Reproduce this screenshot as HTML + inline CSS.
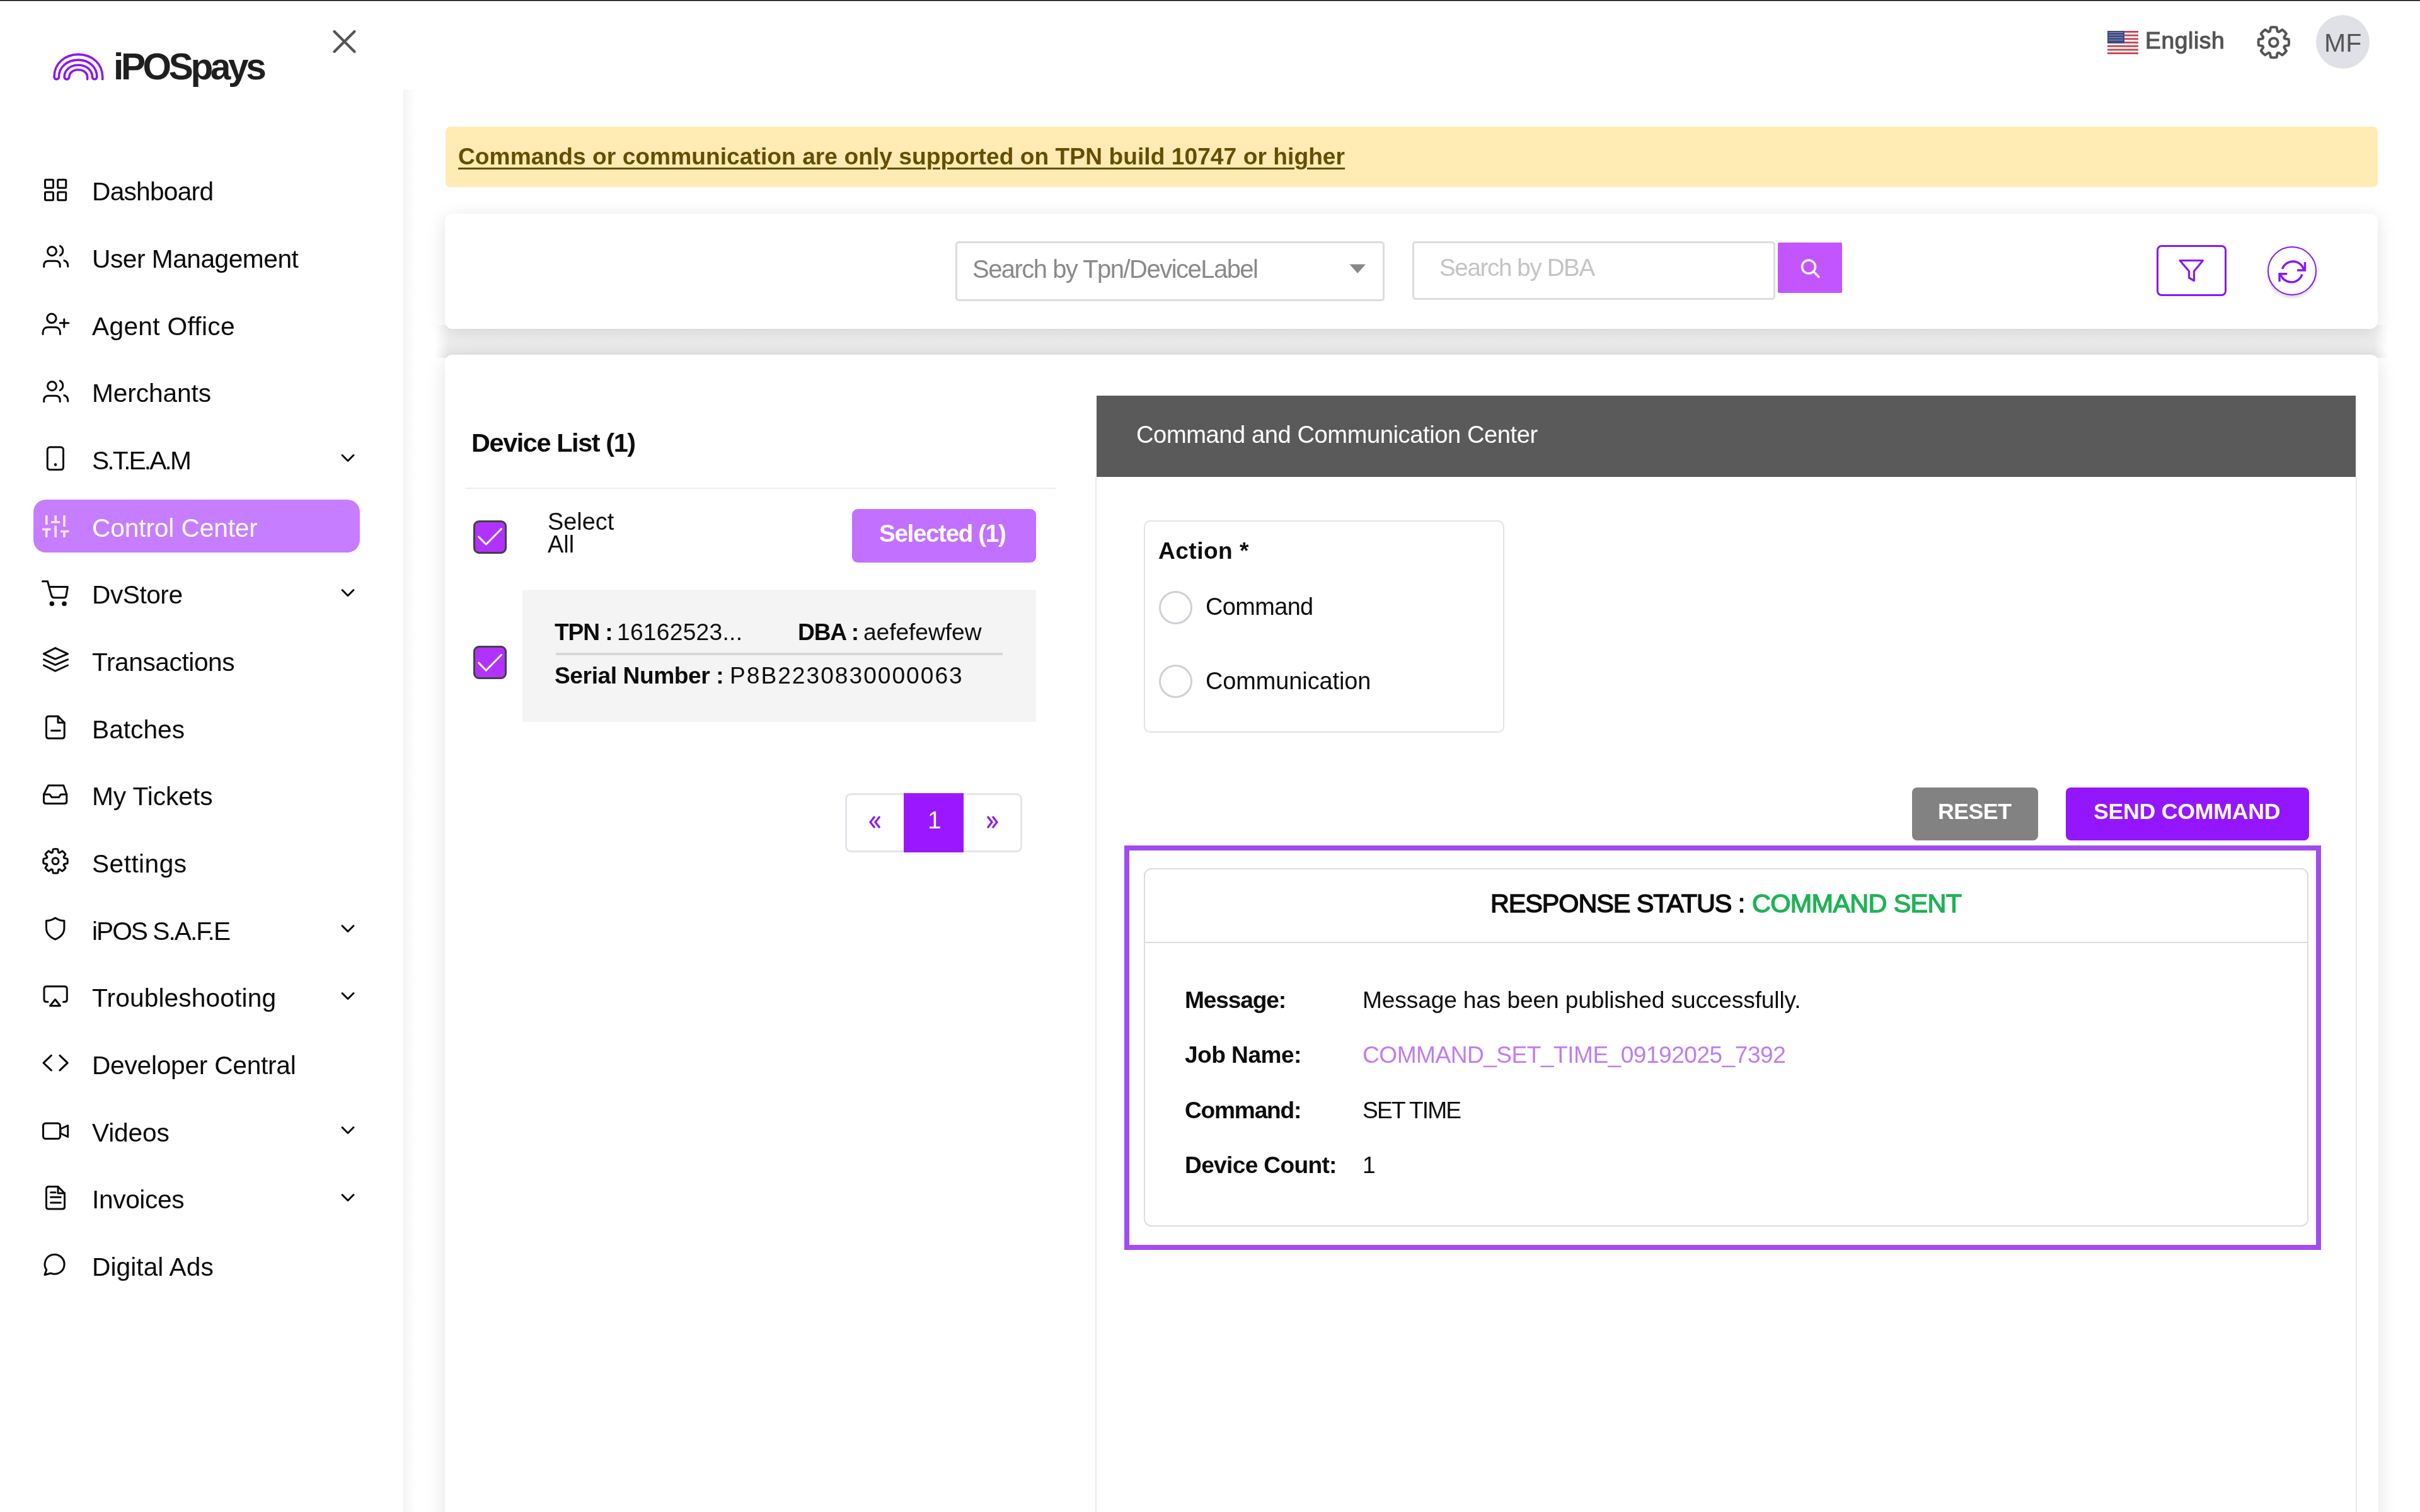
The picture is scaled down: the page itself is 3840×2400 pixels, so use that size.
<!DOCTYPE html>
<html><head><meta charset="utf-8">
<style>
html,body{margin:0;padding:0;}
body{width:3840px;height:2400px;overflow:hidden;position:relative;background:#fff;font-family:"Liberation Sans",sans-serif;}
.a{position:absolute;box-sizing:border-box;}
.t{position:absolute;white-space:pre;line-height:1;will-change:transform;font-family:"Liberation Sans",sans-serif;}
svg{position:absolute;overflow:visible;}
@media (max-width:2500px){body{zoom:0.5;}}
</style></head><body>
<!-- top black line -->
<div class="a" style="left:0;top:0;width:3840px;height:2px;background:linear-gradient(#000 0,#000 1px,#888 1px,#888 2px);"></div>

<!-- sidebar shadow strip -->
<div class="a" style="left:640px;top:142px;width:22px;height:2258px;background:linear-gradient(90deg,#f2f3f3,#fbfbfb 50%,#fff);"></div>

<div class="a" style="left:690px;top:516px;width:3099px;height:52px;background:linear-gradient(#efefef,#f0f0f0 20%,#eeeeee 50%,#e9e9e9 80%,#e4e4e4);-webkit-mask-image:linear-gradient(90deg,transparent 0,#000 22px,#000 3077px,transparent 3099px);"></div>
<!-- search card -->
<div class="a" style="left:706px;top:339px;width:3067px;height:183px;border-radius:12px;background:#fff;box-shadow:0 6px 30px rgba(0,0,0,0.12);"></div>
<!-- main card -->
<div class="a" style="left:706px;top:563px;width:3068px;height:1900px;border-radius:12px;background:#fff;box-shadow:0 6px 30px rgba(0,0,0,0.12);"></div>
<!-- banner -->
<div class="a" style="left:707px;top:201px;width:3066px;height:96px;border-radius:8px;background:#ffebb3;"></div>

<!-- close X -->
<svg style="left:0;top:0" width="10" height="10"><path d="M530.5 50 L562.5 82 M562.5 50 L530.5 82" stroke="#555" stroke-width="4.2" stroke-linecap="round" fill="none"/></svg>

<!-- logo -->
<svg style="left:0;top:0" width="10" height="10"><path d="M162.7 125.8 L162.7 122.0 C162.70 101.50 146.34 86.35 124.20 86.35 C102.23 86.35 86.00 101.50 86.00 122.00 A3.75 3.75 0 0 0 93.50 122.00 C93.50 106.53 106.55 95.10 124.20 95.10 C141.22 95.10 153.80 106.53 153.80 122.00 A3.70 3.70 0 0 1 146.40 122.00 C146.40 111.22 136.97 103.25 124.20 103.25 C111.49 103.25 102.10 111.22 102.10 122.00 A3.90 3.90 0 0 0 109.90 122.00 C109.90 115.56 115.98 110.80 124.20 110.80 C132.48 110.80 138.60 115.56 138.60 122.00 L138.6 125.8" stroke="#8a17f4" stroke-width="3.6" stroke-linecap="round" stroke-linejoin="round" fill="none"/></svg>

<!-- control center highlight -->
<div class="a" style="left:53px;top:792.5px;width:518px;height:84.5px;border-radius:20px;background:#c67dff;"></div>

<svg style="left:64px;top:268.75px" width="48" height="52" viewBox="0 0 48 52"><g fill="none" stroke="#0a0a0a" stroke-width="3" stroke-linejoin="round" stroke-linecap="round"><rect x="7.5" y="16.2" width="13" height="13" rx="1.5"/><rect x="27.7" y="16.2" width="13" height="13" rx="1.5"/><rect x="7.5" y="36" width="13" height="12.8" rx="1.5"/><rect x="27.7" y="36" width="13" height="12.8" rx="1.5"/></g></svg>
<svg style="left:64px;top:375.42px" width="48" height="52" viewBox="0 0 48 52"><g fill="none" stroke="#0a0a0a" stroke-width="3" stroke-linejoin="round" stroke-linecap="round"><circle cx="18.5" cy="23.8" r="7"/><path d="M5.7 48.5 V46.5 C5.7 42 8 39.2 13 39.2 H24 C29 39.2 31.2 42 31.2 46.5 V48.5"/><path d="M31.3 15.5 A8.5 8.5 0 0 1 31.3 30.5"/><path d="M37.8 38.5 C41.5 39.5 43.8 42.5 43.8 48"/></g></svg>
<svg style="left:64px;top:482.09px" width="48" height="52" viewBox="0 0 48 52"><g fill="none" stroke="#0a0a0a" stroke-width="3" stroke-linejoin="round" stroke-linecap="round"><circle cx="17.9" cy="23.3" r="7.2"/><path d="M4.1 48.5 V46 C4.1 41.5 6.5 37.6 12 37.6 H23.5 C29 37.6 31.4 41.5 31.4 46 V48.5"/><path d="M37.8 24.7 V37.2 M31.3 30.8 H44.9"/></g></svg>
<svg style="left:64px;top:588.76px" width="48" height="52" viewBox="0 0 48 52"><g fill="none" stroke="#0a0a0a" stroke-width="3" stroke-linejoin="round" stroke-linecap="round"><circle cx="18.5" cy="23.8" r="7"/><path d="M5.7 48.5 V46.5 C5.7 42 8 39.2 13 39.2 H24 C29 39.2 31.2 42 31.2 46.5 V48.5"/><path d="M31.3 15.5 A8.5 8.5 0 0 1 31.3 30.5"/><path d="M37.8 38.5 C41.5 39.5 43.8 42.5 43.8 48"/></g></svg>
<svg style="left:64px;top:695.43px" width="48" height="52" viewBox="0 0 48 52"><g fill="none" stroke="#0a0a0a" stroke-width="3" stroke-linejoin="round" stroke-linecap="round"><rect x="11.25" y="14.85" width="25.25" height="35.75" rx="4"/><circle cx="24" cy="42.6" r="0.8" fill="#0a0a0a"/></g></svg>
<svg style="left:540px;top:719.43px" width="24" height="16" viewBox="0 0 24 16"><path d="M3 3.5 L12 12.5 L21 3.5" fill="none" stroke="#0a0a0a" stroke-width="3" stroke-linecap="round" stroke-linejoin="round"/></svg>
<svg style="left:64px;top:802.10px" width="48" height="52" viewBox="0 0 48 52"><g fill="none" stroke="#ffe6ff" stroke-width="3" stroke-linejoin="round" stroke-linecap="round"><path d="M9.75 16 V31 M9.75 37 V51 M3 38.2 H16.5 M24.1 16 V25.5 M24.1 32.5 V51 M17 26.8 H31 M38 16 V34 M38 40.5 V51 M32 41.5 H45.5" stroke="#ffe6ff" stroke-width="3.6" stroke-linecap="butt"/></g></svg>
<svg style="left:64px;top:908.77px" width="48" height="52" viewBox="0 0 48 52"><g fill="none" stroke="#0a0a0a" stroke-width="3" stroke-linejoin="round" stroke-linecap="round"><path d="M3.5 13.7 H11.5 L17.5 36 Q18.5 39.7 22.5 39.7 H37.5 Q40.5 39.7 41 36.5 L43.3 22.5 H14.5"/><circle cx="18.3" cy="49.2" r="2.3" fill="#0a0a0a"/><circle cx="38" cy="49.2" r="2.3" fill="#0a0a0a"/></g></svg>
<svg style="left:540px;top:932.77px" width="24" height="16" viewBox="0 0 24 16"><path d="M3 3.5 L12 12.5 L21 3.5" fill="none" stroke="#0a0a0a" stroke-width="3" stroke-linecap="round" stroke-linejoin="round"/></svg>
<svg style="left:64px;top:1015.44px" width="48" height="52" viewBox="0 0 48 52"><g fill="none" stroke="#0a0a0a" stroke-width="3" stroke-linejoin="round" stroke-linecap="round"><path d="M23.7 13.6 L5.5 22.8 L23.7 31.1 L43.5 22.8 Z"/><path d="M5.5 31.9 L23.7 40.3 L43.5 31.9"/><path d="M5.5 41 L23.7 50.1 L43.5 41"/></g></svg>
<svg style="left:64px;top:1122.11px" width="48" height="52" viewBox="0 0 48 52"><g fill="none" stroke="#0a0a0a" stroke-width="3" stroke-linejoin="round" stroke-linecap="round"><path d="M9.5 19 Q9.5 14.9 13.5 14.9 H28 L38.2 25 V46 Q38.2 50 34.2 50 H13.5 Q9.5 50 9.5 46 Z"/><path d="M28 14.9 V25 H38.2"/><path d="M17.6 37.8 H31.3"/></g></svg>
<svg style="left:64px;top:1228.78px" width="48" height="52" viewBox="0 0 48 52"><g fill="none" stroke="#0a0a0a" stroke-width="3" stroke-linejoin="round" stroke-linecap="round"><path d="M5.5 32 L12.8 17.7 H36.8 L41.8 32 V43 Q41.8 46.6 38.2 46.6 H9 Q5.5 46.6 5.5 43 Z"/><path d="M5.5 32 H15 L18 36.5 H29.5 L32.5 32 H41.8"/></g></svg>
<svg style="left:64px;top:1335.45px" width="48" height="52" viewBox="0 0 48 52"><g fill="none" stroke="#0a0a0a" stroke-width="3" stroke-linejoin="round" stroke-linecap="round"><path d="M37.71 27.08 L42.95 28.12 A19.3 19.3 0 0 1 42.95 35.48 L37.71 36.52 A14.5 14.5 0 0 1 37.03 38.16 L40.00 42.59 A19.3 19.3 0 0 1 34.79 47.80 L30.36 44.83 A14.5 14.5 0 0 1 28.72 45.51 L27.68 50.75 A19.3 19.3 0 0 1 20.32 50.75 L19.28 45.51 A14.5 14.5 0 0 1 17.64 44.83 L13.21 47.80 A19.3 19.3 0 0 1 8.00 42.59 L10.97 38.16 A14.5 14.5 0 0 1 10.29 36.52 L5.05 35.48 A19.3 19.3 0 0 1 5.05 28.12 L10.29 27.08 A14.5 14.5 0 0 1 10.97 25.44 L8.00 21.01 A19.3 19.3 0 0 1 13.21 15.80 L17.64 18.77 A14.5 14.5 0 0 1 19.28 18.09 L20.32 12.85 A19.3 19.3 0 0 1 27.68 12.85 L28.72 18.09 A14.5 14.5 0 0 1 30.36 18.77 L34.79 15.80 A19.3 19.3 0 0 1 40.00 21.01 L37.03 25.44 A14.5 14.5 0 0 1 37.71 27.08 Z"/><circle cx="24" cy="31.8" r="5"/></g></svg>
<svg style="left:64px;top:1442.12px" width="48" height="52" viewBox="0 0 48 52"><g fill="none" stroke="#0a0a0a" stroke-width="3" stroke-linejoin="round" stroke-linecap="round"><path d="M23.7 15 C28 18 33 19.5 37.9 19.5 V31 C37.9 40 31 46 23.7 49 C16.4 46 9.5 40 9.5 31 V19.5 C14.4 19.5 19.4 18 23.7 15 Z"/></g></svg>
<svg style="left:540px;top:1466.12px" width="24" height="16" viewBox="0 0 24 16"><path d="M3 3.5 L12 12.5 L21 3.5" fill="none" stroke="#0a0a0a" stroke-width="3" stroke-linecap="round" stroke-linejoin="round"/></svg>
<svg style="left:64px;top:1548.79px" width="48" height="52" viewBox="0 0 48 52"><g fill="none" stroke="#0a0a0a" stroke-width="3" stroke-linejoin="round" stroke-linecap="round"><path d="M12 41.3 H10 Q6 41.3 6 37.3 V20.7 Q6 16.7 10 16.7 H38.3 Q42.3 16.7 42.3 20.7 V37.3 Q42.3 41.3 38.3 41.3 H36.5"/><path d="M23.6 37.5 L31.5 47.5 H15.5 Z"/></g></svg>
<svg style="left:540px;top:1572.79px" width="24" height="16" viewBox="0 0 24 16"><path d="M3 3.5 L12 12.5 L21 3.5" fill="none" stroke="#0a0a0a" stroke-width="3" stroke-linecap="round" stroke-linejoin="round"/></svg>
<svg style="left:64px;top:1655.46px" width="48" height="52" viewBox="0 0 48 52"><g fill="none" stroke="#0a0a0a" stroke-width="3" stroke-linejoin="round" stroke-linecap="round"><path d="M17.4 20.3 L5 32.1 L17.4 43.9 M30.9 20.3 L43.2 32.1 L30.9 43.9"/></g></svg>
<svg style="left:64px;top:1762.13px" width="48" height="52" viewBox="0 0 48 52"><g fill="none" stroke="#0a0a0a" stroke-width="3" stroke-linejoin="round" stroke-linecap="round"><rect x="4.5" y="21" width="27" height="24.5" rx="4"/><path d="M32 30 L43.7 24.5 V42.5 L32 37 Z"/></g></svg>
<svg style="left:540px;top:1786.13px" width="24" height="16" viewBox="0 0 24 16"><path d="M3 3.5 L12 12.5 L21 3.5" fill="none" stroke="#0a0a0a" stroke-width="3" stroke-linecap="round" stroke-linejoin="round"/></svg>
<svg style="left:64px;top:1868.80px" width="48" height="52" viewBox="0 0 48 52"><g fill="none" stroke="#0a0a0a" stroke-width="3" stroke-linejoin="round" stroke-linecap="round"><path d="M9.5 18.5 Q9.5 14.5 13.5 14.5 H28 L38.5 25 V46.5 Q38.5 50 35 50 H13.5 Q9.5 50 9.5 46.5 Z"/><path d="M28 14.5 V25 H38.5"/><path d="M16.5 23.8 H24 M16.5 31.3 H32.3 M16.5 40 H32.3"/></g></svg>
<svg style="left:540px;top:1892.80px" width="24" height="16" viewBox="0 0 24 16"><path d="M3 3.5 L12 12.5 L21 3.5" fill="none" stroke="#0a0a0a" stroke-width="3" stroke-linecap="round" stroke-linejoin="round"/></svg>
<svg style="left:64px;top:1975.47px" width="48" height="52" viewBox="0 0 48 52"><g fill="none" stroke="#0a0a0a" stroke-width="3" stroke-linejoin="round" stroke-linecap="round"><path d="M7 48.5 L9.8 40.5 A15.5 15.5 0 1 1 16.5 46 Z"/></g></svg>

<!-- header right -->
<svg style="left:3344px;top:49px" width="49" height="37" viewBox="0 0 49 37">
  <rect width="49" height="37" fill="#fff"/>
  <g fill="#c8444f"><rect y="0" width="49" height="2.85"/><rect y="5.7" width="49" height="2.85"/><rect y="11.4" width="49" height="2.85"/><rect y="17.1" width="49" height="2.85"/><rect y="22.8" width="49" height="2.85"/><rect y="28.5" width="49" height="2.85"/><rect y="34.15" width="49" height="2.85"/></g>
  <rect width="27" height="20" fill="#3b4a7e"/>
  <g fill="#9aa6cc" opacity="0.8"><rect x="2" y="2" width="23" height="1.2"/><rect x="2" y="6" width="23" height="1.2"/><rect x="2" y="10" width="23" height="1.2"/><rect x="2" y="14" width="23" height="1.2"/></g>
</svg>
<svg style="left:0;top:0" width="10" height="10"><path d="M3625.10 61.24 L3631.65 62.56 A24.3 24.3 0 0 1 3631.65 71.84 L3625.10 73.16 A18.3 18.3 0 0 1 3624.25 75.22 L3627.95 80.79 A24.3 24.3 0 0 1 3621.39 87.35 L3615.82 83.65 A18.3 18.3 0 0 1 3613.76 84.50 L3612.44 91.05 A24.3 24.3 0 0 1 3603.16 91.05 L3601.84 84.50 A18.3 18.3 0 0 1 3599.78 83.65 L3594.21 87.35 A24.3 24.3 0 0 1 3587.65 80.79 L3591.35 75.22 A18.3 18.3 0 0 1 3590.50 73.16 L3583.95 71.84 A24.3 24.3 0 0 1 3583.95 62.56 L3590.50 61.24 A18.3 18.3 0 0 1 3591.35 59.18 L3587.65 53.61 A24.3 24.3 0 0 1 3594.21 47.05 L3599.78 50.75 A18.3 18.3 0 0 1 3601.84 49.90 L3603.16 43.35 A24.3 24.3 0 0 1 3612.44 43.35 L3613.76 49.90 A18.3 18.3 0 0 1 3615.82 50.75 L3621.39 47.05 A24.3 24.3 0 0 1 3627.95 53.61 L3624.25 59.18 A18.3 18.3 0 0 1 3625.10 61.24 Z" fill="none" stroke="#555" stroke-width="4" stroke-linejoin="round"/><circle cx="3607.8" cy="67.2" r="6.8" fill="none" stroke="#555" stroke-width="4"/></svg>
<div class="a" style="left:3675px;top:24px;width:85px;height:85px;border-radius:50%;background:#dfe1e6;"></div>

<!-- search inputs -->
<div class="a" style="left:1515.5px;top:383px;width:681px;height:95px;border:3px solid #dcdce2;border-radius:5px;background:#fff;"></div>
<svg style="left:0;top:0" width="10" height="10"><path d="M2141.5 419.5 H2167 L2154.2 433.8 Z" fill="#888"/></svg>
<div class="a" style="left:2241px;top:383px;width:576px;height:92.5px;border:3px solid #dcdce2;border-radius:5px;background:#fff;"></div>
<div class="a" style="left:2821px;top:385.4px;width:102px;height:79.4px;background:#c355ff;border-radius:2px;"></div>
<svg style="left:0;top:0" width="10" height="10"><circle cx="2870" cy="423.5" r="10.5" stroke="#fff" stroke-width="3.5" fill="none"/><path d="M2878 431.5 L2886 439.5" stroke="#fff" stroke-width="3.5" stroke-linecap="round"/></svg>
<!-- filter & refresh -->
<div class="a" style="left:3422px;top:389px;width:111px;height:81px;border:3.2px solid #8a17f5;border-radius:8px;"></div>
<svg style="left:0;top:0" width="10" height="10"><path d="M3459 413.5 H3495.5 L3481.5 430.5 V445.5 L3473.5 441 V430.5 Z" stroke="#8a17f5" stroke-width="3.2" stroke-linejoin="round" fill="none"/></svg>
<div class="a" style="left:3598px;top:391px;width:78px;height:78px;border:2.7px solid #8a17f5;border-radius:50%;background:#fff;box-shadow:0 3px 5px rgba(0,0,0,0.18);"></div>
<svg style="left:0;top:0" width="10" height="10"><g stroke="#8a17f5" stroke-width="3.4" fill="none">
  <path d="M3621.5 427 A17.9 17.9 0 0 1 3655.5 427.5"/><path d="M3657.5 416 V429 H3645"/>
  <path d="M3653 435.5 A18.1 18.1 0 0 1 3618.5 435"/><path d="M3617 447 V434.8 H3629.3"/></g></svg>

<!-- device list -->
<div class="a" style="left:738.7px;top:774px;width:937px;height:2px;background:#ececf2;"></div>
<div class="a" style="left:751px;top:825.7px;width:53px;height:53px;border:3.5px solid #414141;border-radius:9px;background:#b132ff;"></div>
<svg style="left:0;top:0" width="10" height="10"><path d="M759.5 852 L771.3 864 L795.5 839.5" stroke="#fff" stroke-width="3" fill="none" stroke-linecap="round"/></svg>
<div class="a" style="left:1351.7px;top:808px;width:292.3px;height:85px;border-radius:9px;background:#c170ff;"></div>
<div class="a" style="left:751px;top:1025px;width:53px;height:53px;border:3.5px solid #414141;border-radius:9px;background:#b132ff;"></div>
<svg style="left:0;top:0" width="10" height="10"><path d="M759.5 1052 L771.3 1064 L795.5 1039.5" stroke="#fff" stroke-width="3" fill="none" stroke-linecap="round"/></svg>
<div class="a" style="left:829px;top:935.5px;width:815px;height:210.5px;background:#f4f4f4;"></div>
<div class="a" style="left:882px;top:1036px;width:708.5px;height:3.5px;background:#d7d7d7;"></div>
<!-- pagination -->
<div class="a" style="left:1341px;top:1259.2px;width:281px;height:94px;border:3px solid #e4e4ec;border-radius:9px;"></div>
<div class="a" style="left:1433.7px;top:1259px;width:95.6px;height:94px;background:#9b17ff;"></div>
<svg style="left:0;top:0" width="10" height="10">
  <path d="M1388 1296 L1381 1305 L1388 1314 M1396 1296 L1389 1305 L1396 1314" stroke="#8c1af0" stroke-width="3.2" fill="none"/>
  <path d="M1567 1296 L1574 1305 L1567 1314 M1575 1296 L1582 1305 L1575 1314" stroke="#8c1af0" stroke-width="3.2" fill="none"/>
</svg>

<!-- command center -->
<div class="a" style="left:1738px;top:757px;width:2002px;height:1700px;border:2px solid #e8e8ef;border-top:none;"></div>
<div class="a" style="left:1739.8px;top:627.8px;width:1998.5px;height:129.7px;background:#5a5a5a;"></div>
<div class="a" style="left:1815.4px;top:826.1px;width:571.7px;height:337.2px;border:2.5px solid #e2e2e8;border-radius:10px;"></div>
<div class="a" style="left:1838.9px;top:937.7px;width:53px;height:53px;border:3.5px solid #cdd1d6;border-radius:50%;"></div>
<div class="a" style="left:1838.9px;top:1054.8px;width:53px;height:53px;border:3.5px solid #cdd1d6;border-radius:50%;"></div>
<div class="a" style="left:3033.8px;top:1249.7px;width:200.5px;height:83.9px;border-radius:8px;background:#828282;"></div>
<div class="a" style="left:3277.7px;top:1249.7px;width:386.2px;height:83.9px;border-radius:8px;background:#9316ff;"></div>
<div class="a" style="left:1784.1px;top:1341.8px;width:1898.8px;height:641.8px;border:8px solid #a24cf0;"></div>
<div class="a" style="left:1815.3px;top:1377.6px;width:1848.1px;height:569.5px;border:2.5px solid #dcdce2;border-radius:12px;"></div>
<div class="a" style="left:1816px;top:1494.7px;width:1846.5px;height:2.2px;background:#dcdce2;"></div>

<div class="t" style="left:145.9px;top:284.3px;font-size:40.71px;font-weight:400;color:#0a0a0a;letter-spacing:-0.76px;">Dashboard</div>
<div class="t" style="left:145.9px;top:391.0px;font-size:40.71px;font-weight:400;color:#0a0a0a;letter-spacing:-0.50px;">User Management</div>
<div class="t" style="left:145.9px;top:497.6px;font-size:40.71px;font-weight:400;color:#0a0a0a;letter-spacing:0.30px;">Agent Office</div>
<div class="t" style="left:145.9px;top:604.3px;font-size:40.71px;font-weight:400;color:#0a0a0a;letter-spacing:-0.12px;">Merchants</div>
<div class="t" style="left:145.9px;top:711.0px;font-size:40.71px;font-weight:400;color:#0a0a0a;letter-spacing:-2.89px;">S.T.E.A.M</div>
<div class="t" style="left:145.9px;top:817.7px;font-size:40.71px;font-weight:400;color:#fff;letter-spacing:-0.14px;">Control Center</div>
<div class="t" style="left:145.9px;top:924.3px;font-size:40.71px;font-weight:400;color:#0a0a0a;letter-spacing:-0.50px;">DvStore</div>
<div class="t" style="left:145.9px;top:1031.0px;font-size:40.71px;font-weight:400;color:#0a0a0a;letter-spacing:-0.44px;">Transactions</div>
<div class="t" style="left:145.9px;top:1137.7px;font-size:40.71px;font-weight:400;color:#0a0a0a;letter-spacing:-0.00px;">Batches</div>
<div class="t" style="left:145.9px;top:1244.3px;font-size:40.71px;font-weight:400;color:#0a0a0a;letter-spacing:-0.08px;">My Tickets</div>
<div class="t" style="left:145.9px;top:1351.0px;font-size:40.71px;font-weight:400;color:#0a0a0a;letter-spacing:0.43px;">Settings</div>
<div class="t" style="left:145.9px;top:1457.7px;font-size:40.71px;font-weight:400;color:#0a0a0a;letter-spacing:-2.00px;">iPOS S.A.F.E</div>
<div class="t" style="left:145.9px;top:1564.3px;font-size:40.71px;font-weight:400;color:#0a0a0a;letter-spacing:0.12px;">Troubleshooting</div>
<div class="t" style="left:145.9px;top:1671.0px;font-size:40.71px;font-weight:400;color:#0a0a0a;letter-spacing:-0.27px;">Developer Central</div>
<div class="t" style="left:145.9px;top:1777.7px;font-size:40.71px;font-weight:400;color:#0a0a0a;letter-spacing:-0.18px;">Videos</div>
<div class="t" style="left:145.9px;top:1884.4px;font-size:40.71px;font-weight:400;color:#0a0a0a;letter-spacing:-0.39px;">Invoices</div>
<div class="t" style="left:145.9px;top:1991.0px;font-size:40.71px;font-weight:400;color:#0a0a0a;letter-spacing:0.05px;">Digital Ads</div>
<div class="t" style="left:179.9px;top:76.8px;font-size:58.57px;font-weight:700;color:#1f1f1f;letter-spacing:-4.37px;">iPOSpays</div>
<div class="t" style="left:3403.8px;top:45.7px;font-size:37.14px;font-weight:400;color:#545454;letter-spacing:0.66px;-webkit-text-stroke:1.2px #545454;">English</div>
<div class="t" style="left:3687.6px;top:47.6px;font-size:41px;font-weight:400;color:#555;letter-spacing:0.00px;">MF</div>
<div class="t" style="left:726.9px;top:229.6px;font-size:37.14px;font-weight:700;color:#664d03;letter-spacing:0.06px;text-decoration:underline;text-decoration-thickness:3px;text-underline-offset:5px;">Commands or communication are only supported on TPN build 10747 or higher</div>
<div class="t" style="left:1543.2px;top:407.2px;font-size:40.0px;font-weight:400;color:#8a8a8a;letter-spacing:-1.53px;">Search by Tpn/DeviceLabel</div>
<div class="t" style="left:2283.9px;top:406.4px;font-size:38.57px;font-weight:400;color:#c4c4c4;letter-spacing:-1.37px;">Search by DBA</div>
<div class="t" style="left:748.1px;top:681.7px;font-size:41.43px;font-weight:700;color:#0d0d0d;letter-spacing:-1.41px;">Device List (1)</div>
<div class="t" style="left:869.3px;top:809.8px;font-size:37.86px;font-weight:400;color:#0d0d0d;letter-spacing:0.00px;">Select</div>
<div class="t" style="left:869.3px;top:846.4px;font-size:37.86px;font-weight:400;color:#0d0d0d;letter-spacing:0.00px;">All</div>
<div class="t" style="left:1395.3px;top:827.7px;font-size:38.57px;font-weight:700;color:#fff;letter-spacing:-1.33px;">Selected (1)</div>
<div class="t" style="left:879.6px;top:985.2px;font-size:37.14px;font-weight:700;color:#0d0d0d;letter-spacing:-1.06px;">TPN :</div>
<div class="t" style="left:979.1px;top:985.2px;font-size:37.14px;font-weight:400;color:#0d0d0d;letter-spacing:0.29px;">16162523...</div>
<div class="t" style="left:1265.9px;top:985.2px;font-size:37.14px;font-weight:700;color:#0d0d0d;letter-spacing:-1.13px;">DBA :</div>
<div class="t" style="left:1370.0px;top:985.2px;font-size:37.14px;font-weight:400;color:#0d0d0d;letter-spacing:-0.04px;">aefefewfew</div>
<div class="t" style="left:879.6px;top:1054.1px;font-size:37.14px;font-weight:700;color:#0d0d0d;letter-spacing:-0.41px;">Serial Number :</div>
<div class="t" style="left:1157.8px;top:1054.1px;font-size:37.14px;font-weight:400;color:#0d0d0d;letter-spacing:2.01px;">P8B2230830000063</div>
<div class="t" style="left:1472.0px;top:1282.8px;font-size:38.57px;font-weight:400;color:#fff;letter-spacing:0.00px;">1</div>
<div class="t" style="left:1803.1px;top:670.8px;font-size:38.14px;font-weight:400;color:#fff;letter-spacing:-0.43px;">Command and Communication Center</div>
<div class="t" style="left:1837.6px;top:855.5px;font-size:37.14px;font-weight:700;color:#0d0d0d;letter-spacing:0.44px;">Action *</div>
<div class="t" style="left:1912.6px;top:945.4px;font-size:37.86px;font-weight:400;color:#0d0d0d;letter-spacing:-0.58px;">Command</div>
<div class="t" style="left:1912.6px;top:1062.6px;font-size:37.86px;font-weight:400;color:#0d0d0d;letter-spacing:-0.05px;">Communication</div>
<div class="t" style="left:3075.0px;top:1270.7px;font-size:35.71px;font-weight:700;color:#fff;letter-spacing:-0.52px;">RESET</div>
<div class="t" style="left:3322.1px;top:1270.7px;font-size:35.71px;font-weight:700;color:#fff;letter-spacing:-0.27px;">SEND COMMAND</div>
<div class="t" style="left:2365.1px;top:1412.9px;font-size:41.43px;font-weight:400;color:#0d0d0d;letter-spacing:-1.11px;-webkit-text-stroke:1.4px #0d0d0d;">RESPONSE STATUS :</div>
<div class="t" style="left:2780.1px;top:1412.9px;font-size:41.43px;font-weight:400;color:#1fb356;letter-spacing:-0.68px;-webkit-text-stroke:1.4px #1fb356;">COMMAND SENT</div>
<div class="t" style="left:1879.7px;top:1568.8px;font-size:37.14px;font-weight:700;color:#0d0d0d;letter-spacing:-1.17px;">Message:</div>
<div class="t" style="left:1879.7px;top:1655.6px;font-size:37.14px;font-weight:700;color:#0d0d0d;letter-spacing:-0.55px;">Job Name:</div>
<div class="t" style="left:1879.7px;top:1744.1px;font-size:37.14px;font-weight:700;color:#0d0d0d;letter-spacing:-1.21px;">Command:</div>
<div class="t" style="left:1879.7px;top:1830.9px;font-size:37.14px;font-weight:700;color:#0d0d0d;letter-spacing:-0.68px;">Device Count:</div>
<div class="t" style="left:2161.7px;top:1568.8px;font-size:37.14px;font-weight:400;color:#0d0d0d;letter-spacing:-0.14px;">Message has been published successfully.</div>
<div class="t" style="left:2161.7px;top:1655.6px;font-size:37.14px;font-weight:400;color:#c07cf4;letter-spacing:-0.53px;">COMMAND_SET_TIME_09192025_7392</div>
<div class="t" style="left:2161.7px;top:1744.1px;font-size:37.14px;font-weight:400;color:#0d0d0d;letter-spacing:-1.82px;">SET TIME</div>
<div class="t" style="left:2161.7px;top:1830.9px;font-size:37.14px;font-weight:400;color:#0d0d0d;letter-spacing:0.00px;">1</div>
</body></html>
